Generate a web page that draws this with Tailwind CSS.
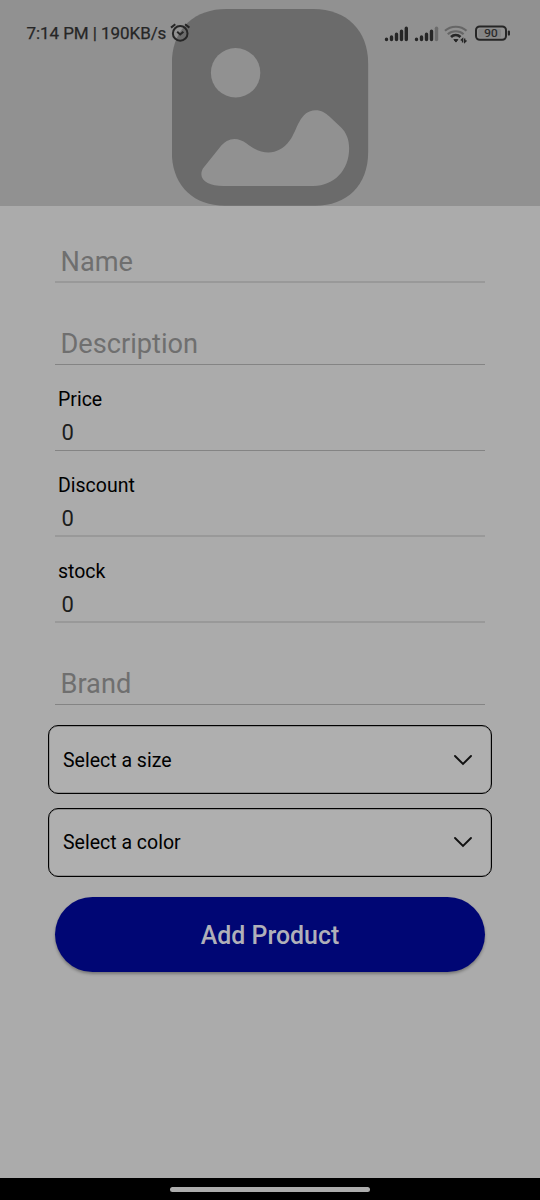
<!DOCTYPE html>
<html lang="en">
<head>
<meta charset="utf-8">
<meta name="viewport" content="width=device-width, initial-scale=1">
<title>Add Product</title>
<script src="https://cdn.jsdelivr.net/npm/@tailwindcss/browser@4"></script>
</head>
<body class="bg-[#ababab]">
<div class="relative flex h-[1200px] w-[540px] flex-col overflow-hidden bg-[#ababab] font-['Roboto',sans-serif] text-black">

  <!-- Status bar over the image header -->
  <div class="absolute inset-x-0 top-0 z-10 flex h-[66px] items-center justify-between pr-[29px] pl-[26.5px] text-[#262626]">
    <div class="flex items-center gap-[3px]">
      <span class="w-[141px] text-[17px] leading-5 font-normal tracking-[-0.06px] whitespace-nowrap [-webkit-text-stroke:0.25px_#262626]">7:14 PM | 190KB/s</span>
      <svg class="-ml-px h-5 w-5" viewBox="0 0 20 20" fill="none" stroke="currentColor" stroke-width="2">
        <circle cx="10.2" cy="10.4" r="7.3"/>
        <path d="M7.2 8.8l3 2.7 3.2-2.7"/>
        <path d="M1 4.6l4.3-3.4M15.1 1.2l4.3 3.4"/>
      </svg>
    </div>
    <svg class="h-[22px] w-[127px]" viewBox="0 0 127 22" fill="none">
      <g stroke="#262626" stroke-width="3.4" stroke-linecap="round">
        <path d="M2.5 17.2v.3M7.5 15v2.5M12.5 12.3v5.2M17.5 9.3v8.2M22.3 6.3v11.2"/>
        <path d="M32.5 17.2v.3M37.5 15v2.5M42.5 12.3v5.2M47.5 9.3v8.2"/>
        <path d="M52.5 6.3v11.2" stroke="#6c6c6c"/>
      </g>
      <g stroke-width="2.1">
        <path d="M61 8.8c5.8-5.5 15.8-5.5 21.5 0" stroke="#666"/>
        <path d="M63.8 12.2c4.2-4 11.6-4 15.8 0" stroke="#666"/>
        <path d="M67 15c2.7-2.7 6.8-2.7 9.5 0" stroke="#262626" stroke-width="2.6"/>
      </g>
      <path d="M69.9 17.6h4l-2 2.5z" fill="#262626" stroke="#262626" stroke-linejoin="round"/>
      <path d="M78.6 20.4v-3.6l-1.8 1.6M80.7 16.6v3.6l1.8-1.6" stroke="#262626" stroke-width="1.4"/>
      <rect x="92" y="4.4" width="30" height="13.4" rx="3.8" stroke="#262626" stroke-width="2"/>
      <rect x="94.4" y="6.8" width="22.6" height="8.6" rx="1.5" fill="#858585"/>
      <path d="M124.9 9.6v3" stroke="#262626" stroke-width="2.2" stroke-linecap="round"/>
      <text x="107" y="15.4" text-anchor="middle" fill="#262626" stroke="#262626" stroke-width="0.2" font-family="Roboto" font-size="11.8">90</text>
    </svg>
  </div>

  <!-- Image picker -->
  <div class="flex h-[206px] shrink-0 justify-center bg-[#919191] pt-[9px]">
    <svg class="h-[197px] w-[197px]" viewBox="36.5 27 590 590">
      <path fill="#6b6b6b" d="M200 27H460C560 27 624 92 624 190V455C624 555 560 616 465 616H195C98 616 36 553 36 455V190C36 90 100 27 200 27Z"/>
      <circle cx="227" cy="218" r="74" fill="#919191"/>
      <path fill="#919191" d="M129 505L180 441C202 413 231 408 260 430C300 462 352 472 389 421C412 391 418 330 467 330C484 330 496 338 508 349L543 382C558 397 567 417 567 445C567 510 522 557 460 557H190C145 557 112 539 129 505Z"/>
    </svg>
  </div>

  <main class="flex flex-col px-[55px]">
    <div class="flex h-[77px] items-end border-b-2 border-[#999] pb-[3.5px] pl-[5.5px] text-[27.2px] leading-8 text-[#6f6f6f]">Name</div>
    <div class="flex h-[82px] items-end border-b border-[#848484] pb-[4px] pl-[5.5px] text-[27.2px] leading-8 text-[#6f6f6f]">Description</div>

    <div class="flex h-[86px] flex-col justify-end border-b border-[#848484] pb-[3px]">
      <div class="pl-[3px] text-[19.5px] leading-7">Price</div>
      <div class="mt-[5px] pl-[6.5px] text-[22px] leading-7 text-[#1d1d1d]">0</div>
    </div>
    <div class="flex h-[86px] flex-col justify-end border-b-2 border-[#999] pb-[2px]">
      <div class="pl-[3px] text-[19.5px] leading-7">Discount</div>
      <div class="mt-[5px] pl-[6.5px] text-[22px] leading-7 text-[#1d1d1d]">0</div>
    </div>
    <div class="flex h-[86px] flex-col justify-end border-b-2 border-[#999] pb-[2px]">
      <div class="pl-[3px] text-[19.5px] leading-7">stock</div>
      <div class="mt-[5px] pl-[6.5px] text-[22px] leading-7 text-[#1d1d1d]">0</div>
    </div>
    <div class="flex h-[82px] items-end border-b border-[#848484] pb-[4px] pl-[5.5px] text-[27.2px] leading-8 text-[#6f6f6f]">Brand</div>

    <div class="-mx-[7px] mt-5 flex flex-col gap-[13.5px]">
      <div class="flex h-[69px] items-center justify-between rounded-[10px] border-[1.5px] border-black bg-[#afafaf] pr-[18px] pl-[14px] text-[19.5px] ring-[0.4px] ring-black/40 ring-inset">
        <span class="pt-[2px]">Select a size</span>
        <svg class="h-5 w-5" viewBox="0 0 20 20" fill="none" stroke="#111" stroke-width="1.9" stroke-linecap="round"><path d="M2 6l8 8 8-8"/></svg>
      </div>
      <div class="flex h-[69px] items-center justify-between rounded-[10px] border-[1.5px] border-black bg-[#afafaf] pr-[18px] pl-[14px] text-[19.5px] ring-[0.4px] ring-black/40 ring-inset">
        <span class="pt-[2px]">Select a color</span>
        <svg class="h-5 w-5" viewBox="0 0 20 20" fill="none" stroke="#111" stroke-width="1.9" stroke-linecap="round"><path d="M2 6l8 8 8-8"/></svg>
      </div>
    </div>

    <button class="mt-[20.5px] h-[75px] rounded-full bg-[#000674] pt-[3px] text-[24.9px] font-medium text-[#b0b0b9] shadow-[0_2px_3px_rgba(0,0,0,0.3)]">Add Product</button>
  </main>

  <div class="mt-auto flex h-[22px] items-center justify-center bg-black">
    <div class="-ml-px h-[5px] w-[200px] rounded-full bg-[#adadad]"></div>
  </div>
</div>
</body>
</html>
